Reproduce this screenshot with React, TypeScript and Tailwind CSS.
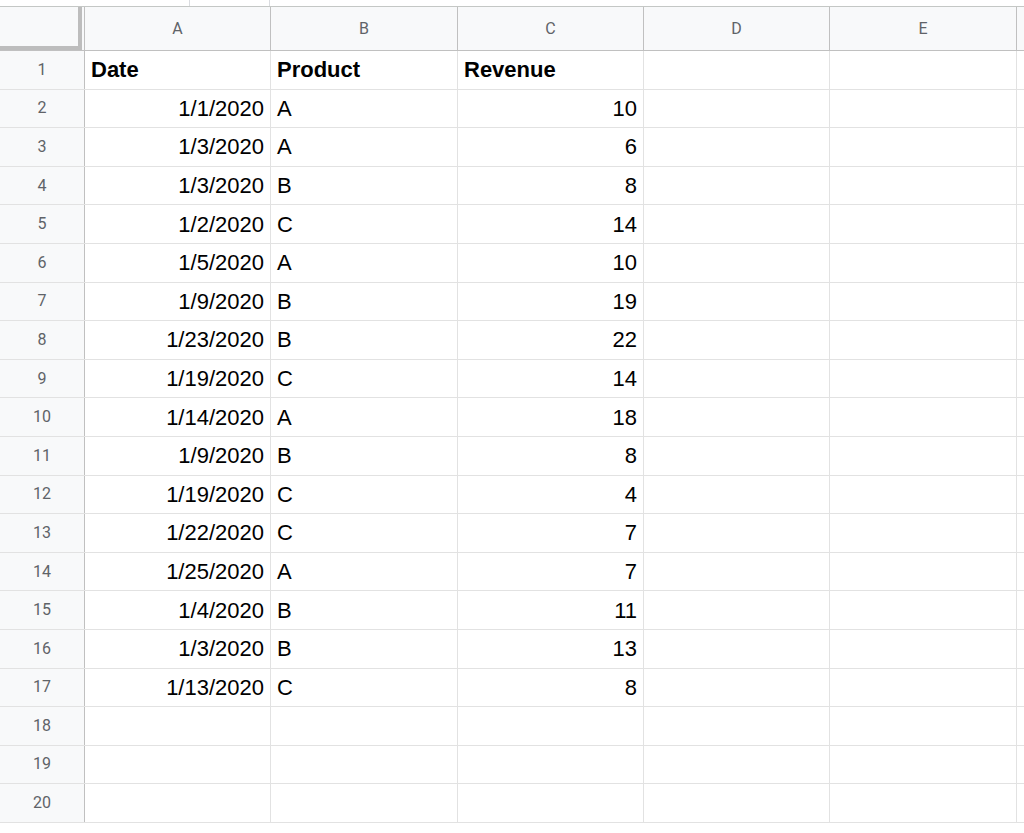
const rows: [string, string, string][] = [
  ["1/1/2020", "A", "10"], ["1/3/2020", "A", "6"], ["1/3/2020", "B", "8"], ["1/2/2020", "C", "14"],
  ["1/5/2020", "A", "10"], ["1/9/2020", "B", "19"], ["1/23/2020", "B", "22"], ["1/19/2020", "C", "14"],
  ["1/14/2020", "A", "18"], ["1/9/2020", "B", "8"], ["1/19/2020", "C", "4"], ["1/22/2020", "C", "7"],
  ["1/25/2020", "A", "7"], ["1/4/2020", "B", "11"], ["1/3/2020", "B", "13"], ["1/13/2020", "C", "8"],
];
const cols = ["A", "B", "C", "D", "E"];
const widths = ["w-[186px]", "w-[187px]", "w-[186px]", "w-[186px]", "w-[187px]"];

export default function App() {
  const all: string[][] = [["Date", "Product", "Revenue"], ...rows, [], [], []];
  return (
    <div className="w-[1024px] h-[833px] overflow-hidden bg-white" style={{ fontFamily: "'Liberation Sans', Arial, sans-serif" }}>
      <div className="h-[7px] border-b border-[#c4c7c5] flex">
        <div className="w-[190px] border-r border-[#dadce0]" />
        <div className="w-[80px] border-r border-[#dadce0]" />
      </div>
      <div className="flex h-[44px] bg-[#f8f9fa] border-b border-[#c0c0c0]" style={{ fontFamily: "Roboto, sans-serif" }}>
        <div className="w-[85px] shrink-0 border-r border-[#c0c0c0] relative">
          <div className="absolute left-0 top-0 w-[82px] h-[43px] border-r-4 border-b-4 border-[#bdbdbd]" />
        </div>
        {cols.map((c, i) => (
          <div key={c} className={`${widths[i]} shrink-0 border-r border-[#c0c0c0] flex items-center justify-center text-[16px] text-[#5f6368]`}>{c}</div>
        ))}
        <div className="flex-1" />
      </div>
      {all.map((r, i) => (
        <div key={i} className="flex h-[38.6px] border-b border-[#e2e2e2]">
          <div className="w-[85px] shrink-0 bg-[#f8f9fa] border-r border-[#c0c0c0] flex items-center justify-center text-[16px] text-[#5f6368]" style={{ fontFamily: "Roboto, sans-serif" }}>{i + 1}</div>
          {widths.map((w, j) => {
            const v = r[j] ?? "";
            const right = i > 0 && (j === 0 || j === 2);
            return (
              <div key={j} className={`${w} shrink-0 border-r border-[#e2e2e2] flex items-center px-[6px] text-[22px] text-black ${right ? "justify-end" : ""} ${i === 0 ? "font-bold" : ""}`}>{v}</div>
            );
          })}
          <div className="flex-1" />
        </div>
      ))}
    </div>
  );
}
